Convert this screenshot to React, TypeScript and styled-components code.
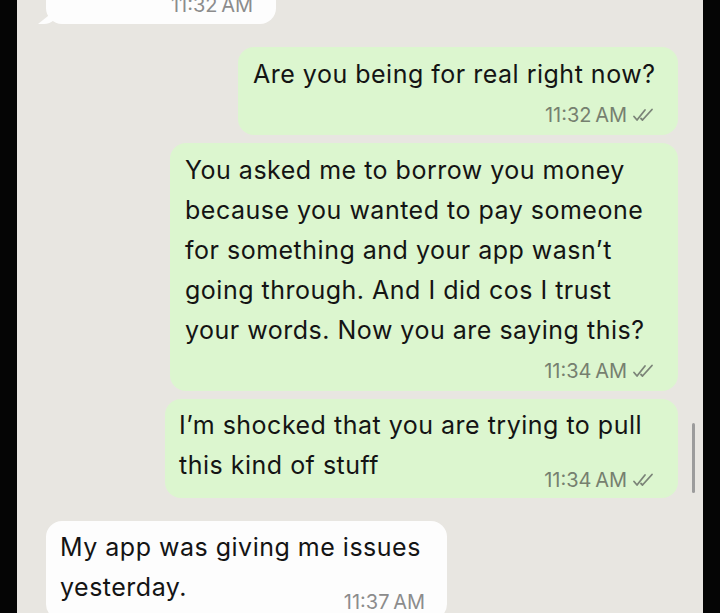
import React from 'react';
import styled, { createGlobalStyle } from 'styled-components';

const GlobalStyle = createGlobalStyle`
    html, body {
        margin: 0;
        padding: 0;
        background: #000;
    }
    * {
        box-sizing: border-box;
    }
`;

interface Message {
    text: string;
    time: string;
    out: boolean;
    width: number;
    inlineMeta?: boolean;
}

const messages: Message[] = [
    { text: 'Are you being for real right now?', time: '11:32 AM', out: true, width: 440 },
    {
        text: 'You asked me to borrow you money because you wanted to pay someone for something and your app wasn\u2019t going through. And I did cos I trust your words. Now you are saying this?',
        time: '11:34 AM',
        out: true,
        width: 508,
    },
    { text: 'I\u2019m shocked that you are trying to pull this kind of stuff', time: '11:34 AM', out: true, width: 513, inlineMeta: true },
    { text: 'My app was giving me issues yesterday.', time: '11:37 AM', out: false, width: 401, inlineMeta: true },
];

const Ticks = () => (
    <svg width='24' height='14' viewBox='0 0 24 14' fill='none' stroke='#7b8478' strokeWidth='1.8' strokeLinecap='round' strokeLinejoin='round'>
        <path d='M2 8.5 L5 12 L13 2' />
        <path d='M9 10.5 L10.5 12 L20 1.5' />
    </svg>
);

const App: React.FC = () => {
    return (
        <>
            <GlobalStyle />
            <Screen>
                <SideBar />
                <Chat>
                    <TopBubble>
                        <CutText>20k?</CutText>
                        <Meta $light>11:32 AM</Meta>
                    </TopBubble>
                    {messages.map((m, i) => (
                        <Bubble key={i} $out={m.out} $w={m.width} $inline={!!m.inlineMeta} $first={i === 0 || (i > 0 && messages[i - 1].out !== m.out)}>
                            <Text $inline={!!m.inlineMeta}>{m.text}</Text>
                            <Meta $light={!m.out} $inline={!!m.inlineMeta}>
                                {m.time}
                                {m.out && <Ticks />}
                            </Meta>
                        </Bubble>
                    ))}
                    <ScrollThumb />
                </Chat>
                <SideBar />
            </Screen>
        </>
    );
};

const Screen = styled.div`
    display: grid;
    grid-template-columns: 17px 1fr 17px;
    width: 720px;
    height: 613px;
    overflow: hidden;
    font-family: Inter, 'Liberation Sans', sans-serif;
`;

const SideBar = styled.div`
    background: #050505;
`;

const Chat = styled.div`
    position: relative;
    display: flex;
    flex-direction: column;
    padding: 0 25px 0 29px;
    background: #e8e6e1;
    overflow: hidden;
`;

const TopBubble = styled.div`
    position: relative;
    flex: none;
    align-self: flex-start;
    display: flex;
    align-items: flex-end;
    justify-content: space-between;
    width: 230px;
    height: 61px;
    margin-top: -37px;
    padding: 0 17px 10px 16px;
    background: #fdfdfd;
    border-radius: 16px;
    &::before {
        content: '';
        position: absolute;
        left: -8px;
        bottom: 0;
        width: 20px;
        height: 16px;
        background: #fdfdfd;
        border-bottom-right-radius: 14px;
        clip-path: polygon(0 100%, 100% 0, 100% 100%);
    }
`;

const CutText = styled.span`
    font-size: 25px;
    line-height: 40px;
    letter-spacing: 0.5px;
    color: #161616;
    margin-bottom: 11px;
`;

const Bubble = styled.div<{ $out: boolean; $w: number; $inline: boolean; $first: boolean }>`
    flex: none;
    display: ${({ $inline }) => ($inline ? 'grid' : 'flex')};
    flex-direction: column;
    align-self: ${({ $out }) => ($out ? 'flex-end' : 'flex-start')};
    width: ${({ $w }) => $w}px;
    margin-top: ${({ $first }) => ($first ? '23px' : '8px')};
    padding: ${({ $inline }) => ($inline ? '6px 16px 9px 14px' : '7px 16px 11px 15px')};
    background: ${({ $out }) => ($out ? '#dcf6cf' : '#fdfdfd')};
    border-radius: 16px;
    color: #141414;
`;

const Text = styled.div<{ $inline: boolean }>`
    grid-area: 1 / 1;
    font-size: 25px;
    line-height: 40px;
    letter-spacing: 0.5px;
    margin-bottom: ${({ $inline }) => ($inline ? '4px' : '0')};
`;

const Meta = styled.div<{ $light?: boolean; $inline?: boolean }>`
    grid-area: 1 / 1;
    align-self: ${({ $inline }) => ($inline ? 'end' : 'flex-end')};
    justify-self: end;
    display: flex;
    align-items: center;
    gap: 5px;
    height: 18px;
    margin-top: ${({ $inline }) => ($inline ? '0' : '12px')};
    margin-right: 6px;
    font-size: 20px;
    color: ${({ $light }) => ($light ? '#8c8c8c' : '#76806f')};
    white-space: nowrap;
    word-spacing: -2px;
`;

const ScrollThumb = styled.div`
    position: absolute;
    right: 8px;
    top: 423px;
    width: 3px;
    height: 70px;
    border-radius: 2px;
    background: #9c9c9c;
`;

export default App;
